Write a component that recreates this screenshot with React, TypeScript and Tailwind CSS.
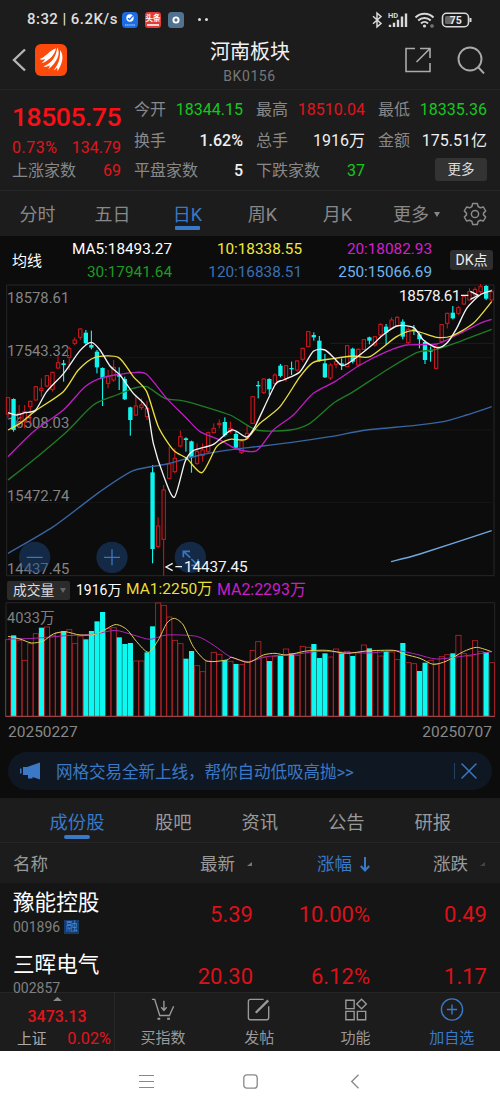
import type { ReactNode } from "react";
import { X } from "lucide-react";

type Point = [number, number];
// up/down, high, body top, body bottom, low
type Candle = ["u" | "d", number, number, number, number];

const STEP = 16.68;
const FIRST = 24;

const candles: Candle[] = [
  ["u", 352, 353, 402, 415], ["d", 355, 357, 450, 455], ["u", 375, 400, 430, 445], ["u", 375, 395, 425, 445],
  ["u", 362, 364, 380, 430], ["u", 318, 320, 360, 362], ["u", 295, 325, 332, 350], ["u", 285, 287, 318, 322],
  ["u", 275, 277, 328, 335], ["u", 225, 248, 264, 266], ["d", 240, 250, 255, 305], ["u", 200, 205, 232, 270],
  ["u", 172, 180, 190, 195], ["u", 145, 147, 172, 180], ["d", 150, 158, 190, 195], ["d", 152, 195, 203, 208],
  ["d", 210, 215, 262, 280], ["d", 262, 264, 295, 378], ["u", 270, 290, 310, 325], ["u", 240, 262, 300, 305],
  ["d", 262, 285, 290, 330], ["d", 290, 297, 358, 360], ["d", 380, 382, 420, 467], ["u", 345, 378, 405, 408],
  ["u", 355, 375, 383, 390], ["u", 362, 385, 410, 420], ["d", 555, 577, 807, 850], ["u", 712, 738, 800, 805],
  ["u", 615, 630, 778, 887], ["u", 500, 552, 595, 598], ["u", 505, 535, 575, 580], ["u", 452, 470, 498, 502],
  ["d", 472, 475, 480, 515], ["d", 482, 484, 532, 578], ["u", 490, 515, 550, 555], ["u", 490, 510, 527, 545],
  ["u", 455, 458, 515, 520], ["u", 430, 445, 458, 460], ["u", 418, 430, 434, 445], ["d", 412, 426, 465, 470],
  ["u", 425, 445, 455, 460], ["d", 455, 462, 503, 508], ["u", 480, 483, 518, 522], ["u", 435, 460, 475, 480],
  ["u", 348, 350, 430, 432], ["d", 303, 315, 319, 355], ["u", 295, 297, 338, 342], ["d", 295, 297, 328, 345],
  ["u", 280, 285, 310, 315], ["d", 252, 257, 288, 292], ["u", 255, 257, 295, 305], ["d", 245, 264, 268, 285],
  ["u", 240, 243, 270, 275], ["u", 203, 205, 238, 245], ["u", 153, 155, 200, 202], ["d", 157, 165, 172, 182],
  ["d", 168, 182, 242, 245], ["d", 222, 250, 292, 294], ["u", 250, 255, 294, 300], ["u", 235, 245, 253, 265],
  ["d", 235, 250, 255, 270], ["u", 195, 197, 260, 262], ["d", 203, 206, 245, 250], ["u", 205, 208, 255, 260],
  ["u", 177, 179, 208, 210], ["d", 170, 172, 182, 193], ["u", 168, 170, 195, 200], ["u", 130, 133, 165, 175],
  ["d", 132, 140, 158, 195], ["u", 112, 120, 145, 148], ["u", 108, 112, 138, 140], ["d", 118, 125, 170, 178],
  ["u", 142, 148, 188, 192], ["d", 135, 148, 153, 165], ["d", 158, 163, 178, 205], ["d", 182, 186, 240, 252],
  ["d", 200, 210, 215, 245], ["u", 195, 200, 265, 268], ["u", 132, 134, 185, 190], ["u", 98, 100, 130, 145],
  ["d", 78, 98, 115, 118], ["u", 78, 83, 100, 105], ["u", 45, 50, 72, 75], ["u", 25, 35, 60, 62],
  ["u", 22, 28, 45, 50], ["u", 12, 20, 35, 42], ["d", 15, 18, 56, 60], ["u", 27, 35, 60, 65],
];

const ma5: Point[] = [[24, 398], [50, 405], [75, 398], [107, 390], [140, 335], [191, 280], [240, 212], [274, 187], [300, 210], [330, 258], [360, 285], [400, 340], [441, 385], [460, 490], [490, 585], [523, 652], [555, 545], [580, 512], [640, 493], [695, 450], [740, 471], [765, 440], [825, 315], [850, 300], [900, 275], [940, 214], [975, 210], [1005, 237], [1027, 257], [1055, 243], [1120, 192], [1145, 168], [1190, 138], [1240, 142], [1270, 180], [1310, 203], [1340, 190], [1370, 145], [1400, 85], [1440, 45], [1475, 32]];
const ma10: Point[] = [[24, 450], [60, 430], [107, 392], [190, 335], [235, 270], [285, 232], [355, 232], [400, 290], [440, 335], [475, 440], [520, 510], [560, 535], [606, 578], [650, 500], [690, 478], [738, 478], [780, 430], [840, 380], [900, 290], [940, 247], [1000, 236], [1060, 228], [1110, 230], [1190, 170], [1240, 152], [1310, 172], [1355, 168], [1420, 130], [1475, 65]];
const ma20: Point[] = [[24, 530], [100, 455], [190, 390], [255, 320], [310, 292], [400, 278], [440, 283], [500, 355], [555, 410], [600, 455], [660, 480], [710, 507], [770, 512], [820, 450], [880, 405], [940, 340], [1005, 305], [1080, 255], [1160, 215], [1220, 195], [1310, 192], [1370, 165], [1440, 130], [1475, 118]];
const ma30: Point[] = [[24, 600], [100, 540], [200, 455], [280, 375], [350, 345], [400, 325], [440, 320], [495, 355], [560, 365], [690, 405], [770, 450], [870, 450], [930, 430], [1000, 370], [1060, 335], [1160, 270], [1250, 218], [1310, 208], [1370, 188], [1475, 148]];
const ma120: Point[] = [[24, 820], [160, 740], [300, 635], [400, 572], [500, 552], [600, 525], [700, 508], [770, 500], [870, 488], [990, 470], [1100, 450], [1240, 437], [1330, 425], [1400, 405], [1475, 380]];
const ma250: Point[] = [[1173, 845], [1260, 822], [1475, 752]];

const volumes =
  "r193 c181 r195 r255 r205 r175 c158 r155 r180 r172 c168 r163 r205 r182 c193 c168 c139 c111 r160 r157 c187 c207 c204 r257 r257 c232 c154 r83 r90 r125 r195 r205 c251 c228 r271 r289 r257 r231 r237 c255 r258 c267 r268 r260 r225 r199 r245 c258 r243 c242 r221 c235 r240 r213 r216 c207 c249 c235 r245 r221 c235 r228 c243 r232 r209 c220 r225 r242 c229 r230 r253 c204 r262 r265 c288 c263 r255 r265 r244 r238 c235 r180 r235 r242 r196 r228 c231 r262"
    .split(" ")
    .map((v) => ({ down: v[0] === "c", top: Number(v.slice(1)) }));

const volMa1: Point[] = [[24, 184], [60, 192], [95, 204], [130, 198], [160, 177], [195, 170], [240, 180], [290, 177], [345, 149], [380, 163], [410, 200], [445, 232], [475, 195], [500, 145], [523, 130], [550, 150], [580, 215], [620, 258], [680, 255], [695, 247], [745, 262], [790, 240], [825, 235], [860, 240], [920, 228], [980, 226], [1040, 235], [1100, 228], [1180, 226], [1215, 238], [1260, 250], [1300, 268], [1340, 258], [1390, 230], [1430, 217], [1475, 230]];
const volMa2: Point[] = [[24, 192], [100, 190], [200, 182], [280, 178], [345, 166], [400, 180], [450, 193], [500, 180], [590, 184], [640, 210], [690, 245], [745, 260], [800, 245], [900, 236], [960, 229], [1100, 234], [1190, 227], [1250, 238], [1310, 252], [1400, 242], [1475, 230]];

function smooth(points: Point[]) {
  let d = `M${points[0][0]} ${points[0][1]}`;
  for (let i = 0; i < points.length - 1; i++) {
    const p0 = points[i - 1] ?? points[i];
    const p1 = points[i];
    const p2 = points[i + 1];
    const p3 = points[i + 2] ?? p2;
    d += `C${p1[0] + (p2[0] - p0[0]) / 8} ${p1[1] + (p2[1] - p0[1]) / 8} ${p2[0] - (p3[0] - p1[0]) / 8} ${p2[1] - (p3[1] - p1[1]) / 8} ${p2[0]} ${p2[1]}`;
  }
  return d;
}

function Line({ points, color, width = 4 }: { points: Point[]; color: string; width?: number }) {
  return <path d={smooth(points)} fill="none" stroke={color} strokeWidth={width} strokeLinejoin="round" />;
}

function StatusBar() {
  return (
    <div className="flex h-[39px] items-center justify-between pl-[27px] pr-[26px] text-[#dedede]">
      <div className="flex items-center">
        <span className="w-[91px] whitespace-nowrap text-[15px] font-medium tracking-[0.450px]">8:32 | 6.2K/s</span>
        <svg className="ml-[4px] h-4 w-4" viewBox="0 0 16 16">
          <rect width="16" height="16" rx="4" fill="#1b6be4" />
          <circle cx="8" cy="6" r="3.7" fill="#fff" />
          <path d="M6 6.2 7.6 7.6 11 3.6" fill="none" stroke="#1b6be4" strokeWidth="1.3" />
          <path d="M3 13h10" stroke="#8fb9f5" strokeWidth="1.6" strokeDasharray="1.5 .6" />
        </svg>
        <span className="ml-[7px] flex h-4 w-4 flex-col items-center justify-center overflow-hidden rounded-[3px] bg-[#e23b38]">
          <span className="whitespace-nowrap text-[7.5px] font-bold leading-[11px] text-white">头条</span>
          <span className="h-[2px] w-3 bg-[#f5d7d2]" />
        </span>
        <svg className="ml-[7px] h-4 w-4" viewBox="0 0 16 16">
          <rect width="16" height="16" rx="3.5" fill="#51738f" />
          <circle cx="8" cy="8" r="2.6" fill="none" stroke="#fff" strokeWidth="1.9" />
        </svg>
        <span className="ml-[14px] flex gap-[4px]">
          <i className="h-[3px] w-[3px] rounded-full bg-[#dedede]" />
          <i className="h-[3px] w-[3px] rounded-full bg-[#dedede]" />
        </span>
      </div>
      <svg className="h-5 w-[102px]" viewBox="0 0 102 20" fill="none" stroke="#d8d8d8">
        <path d="M1 6.300 9 13.500l-4 3.300V3.200L9 6.500 1 13.700" strokeWidth="1.5" />
        <text x="16" y="7.5" fontSize="7.5" fontWeight="700" fill="#d8d8d8" stroke="none">HD</text>
        <path d="M18 14.8v2.2M22 12.8V17M26 9.7V17M30 6.5V17M34 3.6V17" strokeWidth="2.4" />
        <path d="M43.5 7.5c5-5 13-5 18 0M46.2 10.5c3.5-3.4 9-3.4 12.5 0M49 13.4c2-1.9 5-1.9 7 0" strokeWidth="2" />
        <circle cx="52.5" cy="16" r="1.6" fill="#d8d8d8" stroke="none" />
        <circle cx="60" cy="16" r="1.2" strokeWidth="1.2" stroke="#888" />
        <rect x="70.5" y="3.3" width="26" height="13.4" rx="4" strokeWidth="1.6" />
        <path d="M98.500 8v4" strokeWidth="2" />
        <rect x="73" y="6" width="8" height="8" rx="1.5" fill="#666" stroke="none" />
        <text x="77.8" y="13.8" fontSize="10.5" fontWeight="700" fill="#e8e8e8" stroke="none">75</text>
      </svg>
    </div>
  );
}

function TitleBar() {
  return (
    <div className="flex h-[51px] items-center border-b border-[#242424] pb-2">
      <svg className="ml-3 h-6 w-[14px]" viewBox="0 0 14 24" fill="none" stroke="#b5b5b5" strokeWidth="2.4">
        <path d="M13 1.5 2 12l11 10.5" />
      </svg>
      <svg className="ml-[9px] h-8 w-8" viewBox="0 0 32 32">
        <rect width="32" height="32" rx="6" fill="#fb4a0c" />
        <path d="M4.5 15C11 13 13 7.5 21 4.2 20 10 15 16.5 6.5 19.3c2-1.8 3-3 3.500-4.300-2 .8-4 .9-5.500 0Z" fill="#fff" />
        <path d="M8.500 22.500C17 19 21.500 12 22.200 3.500 26 9 22.500 18 13 25.500c1.300-2 1.800-3.200 1.800-4.300-2 1.300-4 1.900-6.300 1.300Z" fill="#fff" />
        <path d="M18.500 26.500C24 20 25.500 13 25 6c4.500 5.500 2.500 14-2.800 21.500.3-1.800.2-3-.2-4-.9 1.400-2.100 2.500-3.500 3Z" fill="#fff" />
      </svg>
      <div className="flex flex-1 flex-col items-center pt-[3px]">
        <span className="pl-[28px] text-[20px] leading-[26px] text-[#f2f2f2]">河南板块</span>
        <span className="pl-[27px] pt-[2px] text-[14px] leading-[18px] tracking-[0.600px] text-[#777]">BK0156</span>
      </div>
      <svg className="h-[26px] w-[26px]" viewBox="0 0 26 26" fill="none" stroke="#aaa" strokeWidth="1.6">
        <path d="M10 1.500H1v23h24V16M25 11V1.500H15M25 1.500 11.500 15" />
      </svg>
      <svg className="ml-[26px] mr-[15px] h-7 w-7" viewBox="0 0 28 28" fill="none" stroke="#aaa" strokeWidth="1.900">
        <circle cx="13" cy="13" r="11.500" />
        <path d="m21 21 6 6.500" />
      </svg>
    </div>
  );
}

function Stat({ label, value, color }: { label: string; value: string; color: string }) {
  return (
    <div className="flex h-[30.500px] items-center justify-between whitespace-nowrap text-[16px]">
      <span className="text-[#888]">{label}</span>
      <span className={color}>{value}</span>
    </div>
  );
}

function QuotePanel() {
  return (
    <div className="grid h-[101px] grid-cols-4 gap-x-[13px] border-b border-[#272727] pl-3 pr-[13px] pt-[5px]">
      <div className="flex flex-col text-[#e0151c]">
        <span className="h-[40px] text-[26.500px] font-medium leading-[44px] tracking-[-0.450px] text-[#fa0f16]">18505.75</span>
        <div className="flex h-[21px] items-center justify-between pt-[5px] text-[16px]">
          <span className="tracking-[0.500px]">0.73%</span>
          <span>134.79</span>
        </div>
        <Stat label="上涨家数" value="69" color="text-[#e0151c]" />
      </div>
      <div>
        <Stat label="今开" value="18344.15" color="text-[#15c81e]" />
        <Stat label="换手" value="1.62%" color="font-medium text-[#f0f0f0]" />
        <Stat label="平盘家数" value="5" color="font-medium text-[#f0f0f0]" />
      </div>
      <div>
        <Stat label="最高" value="18510.04" color="text-[#e0151c]" />
        <Stat label="总手" value="1916万" color="text-[#f0f0f0]" />
        <Stat label="下跌家数" value="37" color="text-[#15c81e]" />
      </div>
      <div>
        <Stat label="最低" value="18335.36" color="text-[#15c81e]" />
        <Stat label="金额" value="175.51亿" color="text-[#f0f0f0]" />
        <div className="flex h-[27px] items-center justify-end">
          <button className="h-[23px] w-[52px] rounded-[3px] bg-[#333] text-[13.500px] leading-[23px] text-[#ddd]">更多</button>
        </div>
      </div>
    </div>
  );
}

const periods = ["分时", "五日", "日K", "周K", "月K"];

function PeriodTabs() {
  return (
    <div className="flex h-[45px] text-[18px] text-[#888]">
      {periods.map((p) => (
        <div key={p} className="flex w-[75px] flex-col items-center">
          <span className={p === "日K" ? "h-[35px] leading-[47px] text-[#3a78c8]" : "h-[35px] leading-[47px]"}>{p}</span>
          {p === "日K" && <span className="h-1 w-[25px] rounded-[1px] bg-[#3a78c8]" />}
        </div>
      ))}
      <div className="flex w-[88px] items-center gap-[5px] pl-[18px] pt-px">
        <span className="leading-[45px]">更多</span>
        <svg className="h-[5px] w-[6px]" viewBox="0 0 6 5"><path d="M0 0h6L3 5Z" fill="#888" /></svg>
      </div>
      <svg className="mt-[11px] h-6 w-6" viewBox="0 0 24 24" fill="none" stroke="#8a8a8a" strokeWidth="1.500" strokeLinejoin="round">
        <path d="M9.700 1.500h4.600l.8 3 2.300 1.300 3-.8 2.300 4-2.200 2.100v1.800l2.200 2.100-2.300 4-3-.8-2.300 1.300-.8 3H9.700l-.8-3-2.300-1.300-3 .8-2.300-4 2.200-2.100v-1.800L1.300 9l2.300-4 3 .8 2.300-1.300Z" />
        <circle cx="12" cy="12" r="3.600" />
      </svg>
    </div>
  );
}

function AverageRow() {
  return (
    <div className="flex h-11 bg-[#0c0c0c] text-[15.300px] text-white">
      <span className="w-[56px] pl-3 text-[15px] leading-[51px]">均线</span>
      <div className="grid w-[376px] grid-cols-[116px_130px_130px] pt-[2px] text-right leading-[23px]">
        <span>MA5:18493.27</span>
        <span className="text-[#f3ea38]">10:18338.55</span>
        <span className="text-[#d41fd0]">20:18082.93</span>
        <span className="text-[#1d9a24]">30:17941.64</span>
        <span className="text-[#3b70b4]">120:16838.51</span>
        <span className="text-[#6fb4ee]">250:15066.69</span>
      </div>
      <span className="ml-[18px] mt-[14px] h-5 w-[43px] rounded-[3px] bg-[#2e2e2e] text-center text-[14px] leading-5 text-[#eee]">DK点</span>
    </div>
  );
}

function CandleChart() {
  return (
    <svg className="block h-[300px] w-[500px] bg-[#0c0c0c]" viewBox="0 0 1500 900">
      <g fill="none" stroke="#272727" strokeWidth="3">
        <path d="M20 15H1482V887H20Z" />
        <path d="M20 232H1482M20 450H1482M20 667H1482" stroke="#161616" />
        <path d="M990 190H1482" stroke="#1e1e1e" />
      </g>
      <g fill="#848484" fontSize="44.500">
        <text x="21" y="69">18578.61</text>
        <text x="21" y="227">17543.32</text>
        <text x="21" y="444">16508.03</text>
        <text x="21" y="663">15472.74</text>
        <text x="21" y="881">14437.45</text>
      </g>
      {candles.map(([dir, high, top, bottom, low], i) => {
        const x = FIRST + i * STEP;
        if (dir === "d") {
          return (
            <g key={i} fill="#0ff5ee">
              <rect x={x - 1.7} y={high} width="3.400" height={low - high} />
              <rect x={x - 6.5} y={top} width="13" height={bottom - top} />
            </g>
          );
        }
        return (
          <g key={i} fill="none" stroke="#d5161e" strokeWidth="3">
            <path d={`M${x} ${high}V${top}M${x} ${bottom}V${low}`} />
            <rect x={x - 5} y={top} width="10" height={bottom - top} />
          </g>
        );
      })}
      <Line points={ma120} color="#3865a4" />
      <Line points={ma250} color="#6ea9e0" />
      <Line points={ma30} color="#1f7c26" />
      <Line points={ma20} color="#c01cc4" />
      <Line points={ma10} color="#ecdf3c" />
      <Line points={ma5} color="#f4f4f4" />
      <g fill="#1c4a86" fillOpacity="0.480">
        <circle cx="104" cy="832" r="47" />
        <circle cx="336" cy="832" r="47" />
        <circle cx="571" cy="832" r="47" />
      </g>
      <g fill="none" stroke="#3b76bd" strokeWidth="4">
        <path d="M80 832h48M312 832h48M336 808v48" />
        <path d="M550 832v-18h20M551 815l20 18M594 838v18h-20M594 856l-20-19" strokeWidth="5" />
      </g>
      <g fill="#f4f4f4" fontSize="46">
        <text x="1197" y="62" textLength="185">18578.61</text>
        <text x="552" y="876" textLength="191">14437.45</text>
      </g>
      <g fill="none" stroke="#f4f4f4" strokeWidth="4">
        <path d="M1383 46h22M1411 34l24 12-24 12" />
        <path d="M518 850l-20 11 20 11M526 860h20" />
      </g>
    </svg>
  );
}

function VolumeSection() {
  return (
    <div className="h-[164px] bg-[#0c0c0c]">
      <div className="flex h-[22px] items-center whitespace-nowrap text-[15.500px]">
        <span className="ml-[7px] flex h-[19px] w-[63px] items-center justify-between rounded-[2px] bg-[#2b2b2b] pl-[6px] pr-1 text-[13.800px] text-[#ddd]">
          成交量
          <svg className="h-[5px] w-[6px]" viewBox="0 0 6 5"><path d="M0 0h6L3 5Z" fill="#666" /></svg>
        </span>
        <span className="ml-[6px] w-[50px] text-[14px] text-white">1916万</span>
        <span className="w-[91px] text-[#e8df3a]">MA1:2250万</span>
        <span className="text-[15.900px] text-[#c81fc8]">MA2:2293万</span>
      </div>
      <svg className="block h-[120px] w-[500px]" viewBox="0 78 1500 360">
        <path d="M18 83H1484V425H18Z" fill="none" stroke="#272727" strokeWidth="3" />
        <text x="21" y="144" fontSize="44" fill="#808080">4033万</text>
        {volumes.map(({ down, top }, i) => {
          const x = FIRST + i * STEP;
          return down ? (
            <rect key={i} x={x - 7.5} y={top} width="15.500" height={424 - top} fill="#0cf8f0" />
          ) : (
            <rect key={i} x={x - 7.5} y={top + 1} width="15.500" height={423 - top} fill="none" stroke="#b8222a" strokeWidth="2.600" />
          );
        })}
        <path d="M18 424H1484" stroke="#9a4a4a" strokeWidth="3" />
        <Line points={volMa2} color="#b124b8" width={3} />
        <Line points={volMa1} color="#e0cf55" width={3} />
      </svg>
      <div className="flex h-[22px] items-center justify-between px-2 pt-px text-[15.500px] text-[#888]">
        <span>20250227</span>
        <span>20250707</span>
      </div>
    </div>
  );
}

function PromoBanner() {
  return (
    <div className="h-[55px] bg-[#0c0c0c] px-2 pt-[9px]">
      <div className="flex h-[38px] items-center rounded-full bg-[#0f1822] text-[#3b78c6]">
        <svg className="ml-3 h-[18px] w-[20px]" viewBox="0 0 20 18" fill="#3b78c6">
          <path d="M0 6.500h1.500v5H0ZM3 5h4l13-4.500v17L12.500 15v1.500H8V13H3Z" />
        </svg>
        <span className="ml-[16px] flex-1 whitespace-nowrap pt-[4px] text-[16.600px] tracking-[-0.100px]">网格交易全新上线，帮你自动低吸高抛&gt;&gt;</span>
        <span className="h-4 w-px bg-[#24425f]" />
        <X className="mr-[9px] h-7 w-7" strokeWidth={1.200} />
      </div>
    </div>
  );
}

const sections = ["股吧", "资讯", "公告", "研报"];

function SectionTabs() {
  return (
    <div className="flex h-[45px] border-b border-[#262626] text-[18.300px] leading-[49px] text-[#999]">
      <div className="ml-6 flex w-[106px] flex-col items-center">
        <span className="h-[37px] text-[#3a78c8]">成份股</span>
        <span className="h-1 w-[26px] rounded-full bg-[#3a78c8]" />
      </div>
      {sections.map((s) => (
        <span key={s} className="w-[86.500px] text-center">{s}</span>
      ))}
    </div>
  );
}

function Corner({ color }: { color: string }) {
  return (
    <svg className="h-1 w-[5px]" viewBox="0 0 5 4"><path d="M5 0v4H0Z" fill={color} /></svg>
  );
}

const stocks = [
  { name: "豫能控股", code: "001896", margin: true, price: "5.39", pct: "10.00%", diff: "0.49" },
  { name: "三晖电气", code: "002857", margin: false, price: "20.30", pct: "6.12%", diff: "1.17" },
];

function StockTable() {
  return (
    <div className="h-[149px] bg-[#151515]">
      <div className="flex h-10 items-center bg-[#1c1c1c] pt-[2px] text-[17.500px] text-[#999]">
        <span className="w-[187px] pl-[13px]">名称</span>
        <span className="flex w-[65px] items-center justify-between pl-[13px]">最新<Corner color="#777" /></span>
        <span className="flex w-[118px] items-center justify-end gap-[8px] text-[#3a78c8]">
          涨幅
          <svg className="h-[15px] w-[10px]" viewBox="0 0 10 15" fill="none" stroke="currentColor" strokeWidth="2">
            <path d="M5 0v13.500M.8 9 5 13.500 9.200 9" />
          </svg>
        </span>
        <span className="flex w-[115px] items-center justify-end gap-[12px]">涨跌<Corner color="#444" /></span>
      </div>
      {stocks.map((s) => (
        <div key={s.code} className="flex h-[61.500px] text-[22px] leading-[63px] text-[#dc1119]">
          <div className="w-[150px] pl-[13px] pt-[6px]">
            <div className="text-[21.600px] leading-[27px] text-white">{s.name}</div>
            <div className="flex h-[14px] items-center gap-1 pt-[7px] text-[14px] leading-[10px] text-[#808080]">
              {s.code}
              {s.margin && <span className="h-[14px] w-[15px] shrink-0 bg-[#173a66] text-center text-[12px] leading-[14px] text-[#4288dc]">融</span>}
            </div>
          </div>
          <span className="w-[103px] text-right">{s.price}</span>
          <span className="w-[117px] text-right">{s.pct}</span>
          <span className="w-[117px] text-right">{s.diff}</span>
        </div>
      ))}
    </div>
  );
}

function Action({ label, active = false, children }: { label: string; active?: boolean; children: ReactNode }) {
  return (
    <div className={active ? "flex flex-1 flex-col items-center pt-[5px] text-[#3a78c8]" : "flex flex-1 flex-col items-center pt-[5px] text-[#999]"}>
      <svg className="h-[26px] w-[26px]" viewBox="0 0 26 26" fill="none" stroke="currentColor" strokeWidth="1.500">
        {children}
      </svg>
      <span className="pt-[3px] text-[15px] leading-[26px]">{label}</span>
    </div>
  );
}

function BottomBar() {
  return (
    <div className="flex h-[59px] border-t border-[#262626] bg-[#1c1c1c]">
      <div className="flex w-[115px] flex-col items-center border-r border-[#282828]">
        <svg className="mt-1 h-[4px] w-[9px]" viewBox="0 0 9 4"><path d="M0 4 4.500 0 9 4Z" fill="#888" /></svg>
        <span className="h-[24px] text-[16px] font-medium leading-[31px] text-[#e0151c]">3473.13</span>
        <div className="flex w-full items-center justify-between pl-[17px] pr-[3px] pt-[2px] text-[16.300px] leading-[24px] text-[#e0151c]">
          <span className="text-[14.800px] text-[#aaa]">上证</span>
          <span>0.02%</span>
        </div>
      </div>
      <Action label="买指数">
        <path d="M1 1.500h3l5.500 17.500H20L24.500 9M14 3v10M11 10l3 3.500L17 10" />
        <path d="M7 22.500h3M17.500 22.500h3" strokeWidth="2.200" />
      </Action>
      <Action label="发帖">
        <path d="M18 1.500H3.500a2 2 0 0 0-2 2v18a2 2 0 0 0 2 2h18a2 2 0 0 0 2-2V9" />
        <path d="M9.500 16 23 2.500" strokeWidth="2.600" />
      </Action>
      <Action label="功能">
        <path d="M2 2.500h9v9H2ZM2 14.500h9v9H2ZM14.500 14.500h9v9h-9ZM19 1.300l5.200 5.200L19 11.700l-5.200-5.200Z" />
      </Action>
      <Action label="加自选" active>
        <circle cx="13" cy="12.500" r="11.500" />
        <path d="M13 7v11M7.500 12.500h11" />
      </Action>
    </div>
  );
}

function SystemNav() {
  return (
    <div className="flex h-[60px] items-center justify-center gap-[89px] bg-white">
      <svg className="h-[15px] w-[15px]" viewBox="0 0 15 15" stroke="#888" strokeWidth="1.200"><path d="M0 1.500h15M0 7.500h15M0 13.500h15" /></svg>
      <svg className="h-[15px] w-[15px]" viewBox="0 0 15 15" fill="none" stroke="#888" strokeWidth="1.300"><rect x=".8" y=".8" width="13.400" height="13.400" rx="3" /></svg>
      <svg className="h-[15px] w-[15px]" viewBox="0 0 15 15" fill="none" stroke="#888" strokeWidth="1.300"><path d="M11.500.8 4.700 7.500l6.800 6.700" /></svg>
    </div>
  );
}

export default function App() {
  return (
    <div className="h-[1111px] w-[500px] overflow-hidden bg-[#1c1c1c] font-[Roboto,'Noto_Sans_CJK_SC',sans-serif]">
      <StatusBar />
      <TitleBar />
      <QuotePanel />
      <PeriodTabs />
      <AverageRow />
      <CandleChart />
      {/* volume legend tucks into the candle chart's bottom margin */}
      <div className="-mt-[1px]">
        <VolumeSection />
      </div>
      <PromoBanner />
      <SectionTabs />
      <StockTable />
      <BottomBar />
      <SystemNav />
    </div>
  );
}
